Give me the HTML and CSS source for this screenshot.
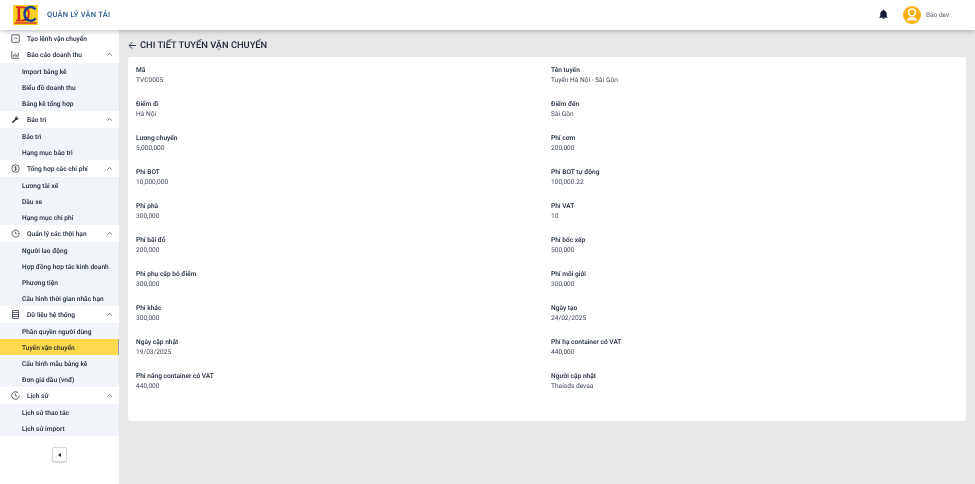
FILE: index.html
```html
<!DOCTYPE html>
<html lang="vi">
<head>
<meta charset="utf-8">
<title>Quản lý vận tải</title>
<link rel="stylesheet" href="styles.css">
</head>
<body>
<header class="topbar">
  <div class="brand">
    <svg class="logo" viewBox="0 0 26 21" aria-hidden="true">
      <rect width="26" height="21" fill="#f6d21f"/>
      <rect x="3" y="1.500" width="6" height="1.600" fill="#d8232a"/>
      <rect x="3" y="15.500" width="6" height="1.600" fill="#d8232a"/>
      <rect x="4.600" y="2" width="2.800" height="15" fill="#d8232a"/>
      <path d="M9 2.500C15 2 16.500 5.500 16.500 9.300S15 16.600 9 16.200" fill="none" stroke="#d8232a" stroke-width="2"/>
      <path d="M23.500 4.600C22 2.600 20 2 18.400 2.200 14 2.800 12 6 12 9.400s2 6.600 6.400 7c2 .2 4-.6 5.100-2.400" fill="none" stroke="#12409c" stroke-width="2.600"/>
      <rect x="1.500" y="18.200" width="23" height="1.400" fill="#d8232a"/>
    </svg>
    <span class="brand-name">QUẢN LÝ VẬN TẢI</span>
  </div>
  <div class="user">
    <svg class="bell" viewBox="0 0 24 24" aria-hidden="true"><path d="M12 22a2.500 2.500 0 0 0 2.400-2h-4.800A2.500 2.500 0 0 0 12 22zm7-6v-5.500c0-3.300-2-6-5-6.800V3a2 2 0 0 0-4 0v.7c-3 .8-5 3.500-5 6.800V16l-2 2v1h18v-1z"/></svg>
    <span class="avatar">
      <svg viewBox="0 0 18 18" aria-hidden="true"><circle cx="9" cy="6.400" r="3.300" fill="none" stroke="#fff" stroke-width="1.500"/><path d="M3.500 14.500c.4-2.300 2.600-3.500 5.500-3.500s5.100 1.200 5.500 3.500z" fill="#fff"/></svg>
    </span>
    <span class="user-name">Bao dev</span>
  </div>
</header>
<div class="shell">
  <nav class="sidebar">
    <div class="head first">
      <svg class="ico" viewBox="0 0 12 12" aria-hidden="true"><rect x="1" y="1" width="10" height="10" rx=".6"/><path d="M3.800 7l2.200-2.200L8.200 7"/></svg>
      <span class="head-text">Tạo lệnh vận chuyển</span>
    </div>
    <div class="head">
      <svg class="ico" viewBox="0 0 12 12" aria-hidden="true"><path d="M1 1.500v9.500h10M3.500 9V6M5.500 9V4.500M7.500 9V6.500M9.500 9V3.500"/></svg>
      <span class="head-text">Báo cáo doanh thu</span>
      <svg class="chev" viewBox="0 0 8 8" aria-hidden="true"><path d="M1.500 5.200L4 2.800l2.500 2.400"/></svg>
    </div>
    <div class="sub">
      <a class="item"><span class="item-text">Import bảng kê</span></a>
      <a class="item"><span class="item-text">Biểu đồ doanh thu</span></a>
      <a class="item"><span class="item-text">Bảng kê tổng hợp</span></a>
    </div>
    <div class="head">
      <svg class="ico ico-solid" viewBox="0 0 12 12" aria-hidden="true"><path d="M1 9.600L5.300 5.300C5 3.600 6.300 1.500 8.900 1.500L7.500 3.300l1.200 1.200 1.800-1.400c0 2.600-2 3.900-3.700 3.600L2.500 11z"/></svg>
      <span class="head-text">Bảo trì</span>
      <svg class="chev" viewBox="0 0 8 8" aria-hidden="true"><path d="M1.500 5.200L4 2.800l2.500 2.400"/></svg>
    </div>
    <div class="sub">
      <a class="item"><span class="item-text">Bảo trì</span></a>
      <a class="item"><span class="item-text">Hạng mục bảo trì</span></a>
    </div>
    <div class="head">
      <svg class="ico" viewBox="0 0 12 12" aria-hidden="true"><circle cx="6" cy="6" r="5"/><path d="M7.500 4.300C7 3.500 4.600 3.400 4.600 4.700S7.500 5.800 7.500 7.200 5 8.600 4.400 7.700M6 2.800v6.400" stroke-width=".8"/></svg>
      <span class="head-text">Tổng hợp các chi phí</span>
      <svg class="chev" viewBox="0 0 8 8" aria-hidden="true"><path d="M1.500 5.200L4 2.800l2.500 2.400"/></svg>
    </div>
    <div class="sub">
      <a class="item"><span class="item-text">Lương tài xế</span></a>
      <a class="item"><span class="item-text">Dầu xe</span></a>
      <a class="item"><span class="item-text">Hạng mục chi phí</span></a>
    </div>
    <div class="head">
      <svg class="ico" viewBox="0 0 12 12" aria-hidden="true"><path d="M10.500 4.500A4.700 4.700 0 1 0 10.700 7M6 3.500V6l1.800 1M9 6h2.500"/></svg>
      <span class="head-text">Quản lý các thời hạn</span>
      <svg class="chev" viewBox="0 0 8 8" aria-hidden="true"><path d="M1.500 5.200L4 2.800l2.500 2.400"/></svg>
    </div>
    <div class="sub">
      <a class="item"><span class="item-text">Người lao động</span></a>
      <a class="item"><span class="item-text">Hợp đồng hợp tác kinh doanh</span></a>
      <a class="item"><span class="item-text">Phương tiện</span></a>
      <a class="item"><span class="item-text">Cấu hình thời gian nhắc hạn</span></a>
    </div>
    <div class="head">
      <svg class="ico" viewBox="0 0 12 12" aria-hidden="true"><rect x="2" y=".6" width="8" height="10.800" rx=".6"/><path d="M2 3.400h8M2 6h8M2 8.600h8"/></svg>
      <span class="head-text">Dữ liệu hệ thống</span>
      <svg class="chev" viewBox="0 0 8 8" aria-hidden="true"><path d="M1.500 5.200L4 2.800l2.500 2.400"/></svg>
    </div>
    <div class="sub">
      <a class="item"><span class="item-text">Phân quyền người dùng</span></a>
      <a class="item active"><span class="item-text">Tuyến vận chuyển</span></a>
      <a class="item"><span class="item-text">Cấu hình mẫu bảng kê</span></a>
      <a class="item"><span class="item-text">Đơn giá dầu (vnđ)</span></a>
    </div>
    <div class="head">
      <svg class="ico" viewBox="0 0 12 12" aria-hidden="true"><path d="M10 3A5 5 0 1 0 11 6M6 3.300V6l1.900 1.200"/></svg>
      <span class="head-text">Lịch sử</span>
      <svg class="chev" viewBox="0 0 8 8" aria-hidden="true"><path d="M1.500 5.200L4 2.800l2.500 2.400"/></svg>
    </div>
    <div class="sub">
      <a class="item"><span class="item-text">Lịch sử thao tác</span></a>
      <a class="item"><span class="item-text">Lịch sử import</span></a>
    </div>
    <div class="collapse">
      <button class="collapse-btn" type="button" aria-label="Thu gọn"><span class="tri"></span></button>
    </div>
  </nav>
  <main class="main">
    <h1 class="title">
      <svg class="back" viewBox="0 0 10 10" aria-hidden="true"><path d="M9 5H1.500M4.800 1.500L1.300 5l3.500 3.500"/></svg>
      <span class="title-text">CHI TIẾT TUYẾN VẬN CHUYỂN</span>
    </h1>
    <section class="card">
      <div class="field"><div class="label">Mã</div><div class="value">TVC0005</div></div>
      <div class="field"><div class="label">Tên tuyến</div><div class="value">Tuyến Hà Nội - Sài Gòn</div></div>
      <div class="field"><div class="label">Điểm đi</div><div class="value">Hà Nội</div></div>
      <div class="field"><div class="label">Điểm đến</div><div class="value">Sài Gòn</div></div>
      <div class="field"><div class="label">Lương chuyến</div><div class="value">5,000,000</div></div>
      <div class="field"><div class="label">Phí cơm</div><div class="value">200,000</div></div>
      <div class="field"><div class="label">Phí BOT</div><div class="value">10,000,000</div></div>
      <div class="field"><div class="label">Phí BOT tự động</div><div class="value">100,000.22</div></div>
      <div class="field"><div class="label">Phí phà</div><div class="value">300,000</div></div>
      <div class="field"><div class="label">Phí VAT</div><div class="value">10</div></div>
      <div class="field"><div class="label">Phí bãi đỗ</div><div class="value">200,000</div></div>
      <div class="field"><div class="label">Phí bốc xếp</div><div class="value">500,000</div></div>
      <div class="field"><div class="label">Phí phụ cấp bỏ điểm</div><div class="value">300,000</div></div>
      <div class="field"><div class="label">Phí môi giới</div><div class="value">300,000</div></div>
      <div class="field"><div class="label">Phí khác</div><div class="value">300,000</div></div>
      <div class="field"><div class="label">Ngày tạo</div><div class="value">24/02/2025</div></div>
      <div class="field"><div class="label">Ngày cập nhật</div><div class="value">19/03/2025</div></div>
      <div class="field"><div class="label">Phí hạ container có VAT</div><div class="value">440,000</div></div>
      <div class="field"><div class="label">Phí nâng container có VAT</div><div class="value">440,000</div></div>
      <div class="field"><div class="label">Người cập nhật</div><div class="value">Thaisds devaa</div></div>
    </section>
  </main>
</div>
</body>
</html>
```
FILE: styles.css
```css
* { box-sizing: border-box; }
html, body { height: 100%; }
body {
  margin: 0;
  height: 484px;
  overflow: hidden;
  display: flex;
  flex-direction: column;
  font-family: Roboto, "Noto Sans", sans-serif;
  font-size: 6.600px;
  text-rendering: geometricPrecision;
  color: #1e2a3c;
  background: #e8e8e8;
}
.brand-name, .user-name, .head-text, .item-text, .title-text, .label, .value { filter: blur(.2px); }
.topbar {
  height: 30px;
  flex: none;
  display: flex;
  align-items: center;
  justify-content: space-between;
  padding: 0 0 1px 13px;
  background: #fff;
  box-shadow: 0 1px 5px rgba(0, 0, 0, .28);
  position: relative;
  z-index: 2;
}
.brand { display: flex; align-items: center; gap: 9px; }
.logo { width: 25px; height: 20px; display: block; }
.brand-name { font-size: 7.500px; font-weight: 500; color: #2a5a92; letter-spacing: .25px; }
.user { display: flex; align-items: center; width: 97px; }
.bell { width: 11px; height: 11px; fill: #141c33; margin-right: 14px; }
.avatar {
  width: 18px; height: 18px; border-radius: 50%;
  background: #fbb000;
  display: flex;
  margin-right: 5px;
}
.avatar svg { width: 18px; height: 18px; }
.user-name { font-size: 6.500px; color: #555d6b; }
.shell { flex: 1; display: flex; min-height: 0; }
.sidebar { width: 119px; flex: none; background: #fff; }
.head {
  height: 17px;
  display: flex;
  align-items: center;
  padding: 0 6px 0 11px;
  font-weight: 500;
  color: #172235;
}
.head.first { height: 16px; }
.head-text { flex: 1; padding-top: 1px; }
.ico {
  width: 9px; height: 9px; flex: none; margin-right: 7px;
  fill: none; stroke: #2a3342; stroke-width: 1;
}
.ico-solid { fill: #2a3342; stroke: none; }
.chev { width: 7px; height: 7px; fill: none; stroke: #555d6b; stroke-width: 1; }
.sub { background: #f1f5f9; }
.item {
  display: flex;
  align-items: center;
  height: 16px;
  padding: 1px 0 0 22px;
  font-weight: 500;
  color: #172235;
  white-space: nowrap;
}
.item.active { background: #fdd94b; border-right: 1px solid #98a0a8; }
.collapse { display: flex; justify-content: center; padding-top: 11px; }
.collapse-btn {
  width: 15px; height: 15px; padding: 0;
  display: flex; align-items: center; justify-content: center;
  background: #fff;
  border: 1px solid #d4d7dc;
  border-radius: 2px;
  box-shadow: 0 1px 1px rgba(0, 0, 0, .15);
}
.tri {
  width: 0; height: 0;
  border-style: solid;
  border-width: 2.500px 3px 2.500px 0;
  border-color: transparent #1e2a3c transparent transparent;
}
.main { flex: 1; min-width: 0; padding: 9px 9px 0; }
.title {
  margin: 0 0 6px;
  height: 12px;
  display: flex; align-items: center; gap: 3px;
  font-size: 9.300px;
  font-weight: 500;
  color: #172235;
}
.back { width: 9px; height: 9px; fill: none; stroke: #1e2a3c; stroke-width: 1; }
.card {
  height: 364px;
  background: #fff;
  border-radius: 3px;
  padding: 8px;
  display: grid;
  grid-template-columns: 415px 1fr;
  grid-auto-rows: 34px;
}
.label { font-weight: 500; color: #172235; line-height: 10px; }
.value { color: #3f4858; line-height: 10px; }
```
